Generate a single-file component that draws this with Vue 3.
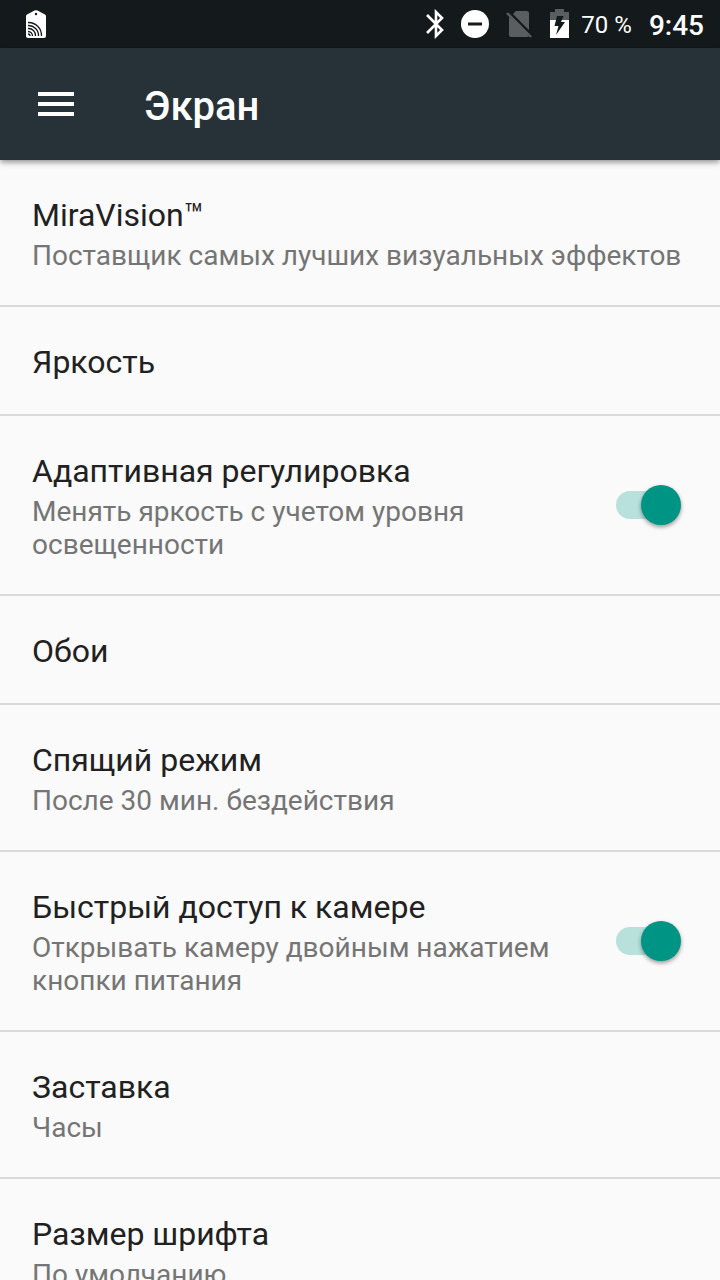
<script setup>
import { ref } from 'vue'

const items = ref([
  { id: 'mira', title: 'MiraVision™', summary: 'Поставщик самых лучших визуальных эффектов' },
  { id: 'brightness', title: 'Яркость' },
  { id: 'adaptive', title: 'Адаптивная регулировка', summary: 'Менять яркость с учетом уровня освещенности', toggle: true, on: true },
  { id: 'wallpaper', title: 'Обои' },
  { id: 'sleep', title: 'Спящий режим', summary: 'После 30 мин. бездействия' },
  { id: 'camera', title: 'Быстрый доступ к камере', summary: 'Открывать камеру двойным нажатием кнопки питания', toggle: true, on: true },
  { id: 'saver', title: 'Заставка', summary: 'Часы' },
  { id: 'font', title: 'Размер шрифта', summary: 'По умолчанию' }
])
</script>

<template>
  <div class="screen">
    <div class="status">
      <svg class="tag" width="20" height="28" viewBox="0 0 20 28" aria-hidden="true">
        <path d="M1 4.500 8.500 .6Q10-.2 11.500 .6L19 4.500Q20 5 20 6V26Q20 28 18 28H2Q0 28 0 26V6Q0 5 1 4.500Z" fill="#fff" />
        <circle cx="10" cy="4" r="1.200" fill="#14191c" />
        <g fill="none" stroke="#14191c" stroke-width="1.300">
          <path d="M2 12.500A13 13 0 0 1 15.500 26" />
          <path d="M2 15.500A10 10 0 0 1 12.500 26" />
          <path d="M2 18.500A7 7 0 0 1 9.500 26" />
          <path d="M2 21.500A4.500 4.500 0 0 1 6.500 26" />
          <path d="M2 24Q4 24 4 26" />
        </g>
      </svg>
      <div class="indicators">
        <svg width="18" height="30" viewBox="0 0 18 30" fill="none" stroke="#fff" stroke-width="2.600" aria-hidden="true">
          <path d="M1 6 16 21 10 27V3L16 9 1 24" />
        </svg>
        <svg class="dnd" width="28" height="28" viewBox="0 0 28 28" aria-hidden="true">
          <circle cx="14" cy="14" r="14" fill="#fff" />
          <path d="M7 14H21" stroke="#14191c" stroke-width="3" />
        </svg>
        <svg class="sim" width="28" height="28" viewBox="0 0 28 28" aria-hidden="true">
          <path d="M10 1H20Q23 1 23 3V25Q23 27 21 27H5Q3 27 3 25V8Z" fill="#5a5e60" />
          <path d="M2 1 28 27" stroke="#14191c" stroke-width="2.600" />
          <path d="M1 3 25 27" stroke="#5a5e60" stroke-width="2.400" />
        </svg>
        <svg class="battery" width="20" height="30" viewBox="0 0 20 30" aria-hidden="true">
          <path d="M0 3H5V0H14V3H19V12H0Z" fill="#5a5e60" />
          <path d="M0 11H19V29H0Z" fill="#fff" />
          <path d="M7 7H13.500L11 13H15L6 26 8.500 17H4.500Z" fill="#14191c" />
        </svg>
        <span class="percent">70 %</span>
        <time class="clock">9:45</time>
      </div>
    </div>

    <header class="toolbar">
      <button class="menu" type="button" aria-label="Меню">
        <svg width="36" height="24" viewBox="0 0 36 24" fill="#fff" aria-hidden="true">
          <path d="M0 0H36V4H0ZM0 10H36V14H0ZM0 20H36V24H0Z" />
        </svg>
      </button>
      <h1>Экран</h1>
    </header>

    <main class="list">
      <template v-for="item in items" :key="item.id">
        <label v-if="item.toggle" class="row">
          <span class="text">
            <span class="title">{{ item.title }}</span>
            <span class="summary">{{ item.summary }}</span>
          </span>
          <input v-model="item.on" class="switch" type="checkbox" role="switch" />
        </label>
        <button v-else class="row" type="button">
          <span class="text">
            <span class="title">{{ item.title }}</span>
            <span v-if="item.summary" class="summary">{{ item.summary }}</span>
          </span>
        </button>
      </template>
    </main>
  </div>
</template>

<style>
body {
  margin: 0;
  background: #fafafa;
}
</style>

<style scoped>
.screen {
  display: flex;
  flex-direction: column;
  height: 100vh;
  overflow: hidden;
  background: #fafafa;
  font-family: Roboto, "Noto Sans", sans-serif;
}

.status {
  flex: none;
  display: flex;
  align-items: center;
  justify-content: space-between;
  box-sizing: border-box;
  height: 48px;
  padding: 0 16px 0 26px;
  background: #14191c;
  color: #fff;
}

.status svg {
  display: block;
}

.indicators {
  display: flex;
  align-items: center;
}

.dnd {
  margin-left: 17px;
}

.sim {
  margin-left: 17px;
}

.battery {
  margin-left: 16px;
}

.percent {
  margin-left: 11px;
  font-size: 24px;
  line-height: 32px;
  padding-top: 2px;
}

.clock {
  margin-left: 17px;
  font-size: 28px;
  font-weight: 500;
  line-height: 32px;
  padding-top: 3px;
}

.toolbar {
  flex: none;
  position: relative;
  display: flex;
  align-items: center;
  height: 112px;
  background: #263238;
  box-shadow: 0 2px 6px rgba(0, 0, 0, 0.45);
}

.menu {
  display: flex;
  align-items: center;
  justify-content: center;
  width: 112px;
  height: 112px;
  padding: 0;
  border: 0;
  background: none;
}

h1 {
  margin: 6px 0 0 32px;
  color: #fff;
  font-size: 40px;
  font-weight: 500;
  line-height: 48px;
}

.list {
  flex: 1;
  min-height: 0;
  overflow-y: auto;
  scrollbar-width: none;
}

.row {
  display: flex;
  align-items: center;
  justify-content: space-between;
  box-sizing: border-box;
  width: 100%;
  padding: 32px;
  border: 0;
  border-bottom: 2px solid #dadada;
  background: none;
  font-family: inherit;
  text-align: left;
}

.text {
  flex: 1;
  min-width: 0;
}

.title,
.summary {
  display: block;
}

.title {
  padding-top: 4px;
  color: #212121;
  font-size: 32px;
  line-height: 39px;
}

.summary {
  padding: 4px 0 1px;
  color: #757575;
  font-size: 28px;
  line-height: 33px;
}

.switch {
  appearance: none;
  flex: none;
  display: flex;
  align-items: center;
  width: 64px;
  height: 28px;
  margin: 0 8px 0 32px;
  border-radius: 14px;
  background: #b9b9b9;
}

.switch::before {
  content: "";
  flex: none;
  width: 40px;
  height: 40px;
  border-radius: 50%;
  background: #ececec;
  box-shadow: 0 2px 4px rgba(0, 0, 0, 0.4);
}

.switch:checked {
  background: #b8e1dc;
}

.switch:checked::before {
  margin-left: 25px;
  background: #009485;
}
</style>
